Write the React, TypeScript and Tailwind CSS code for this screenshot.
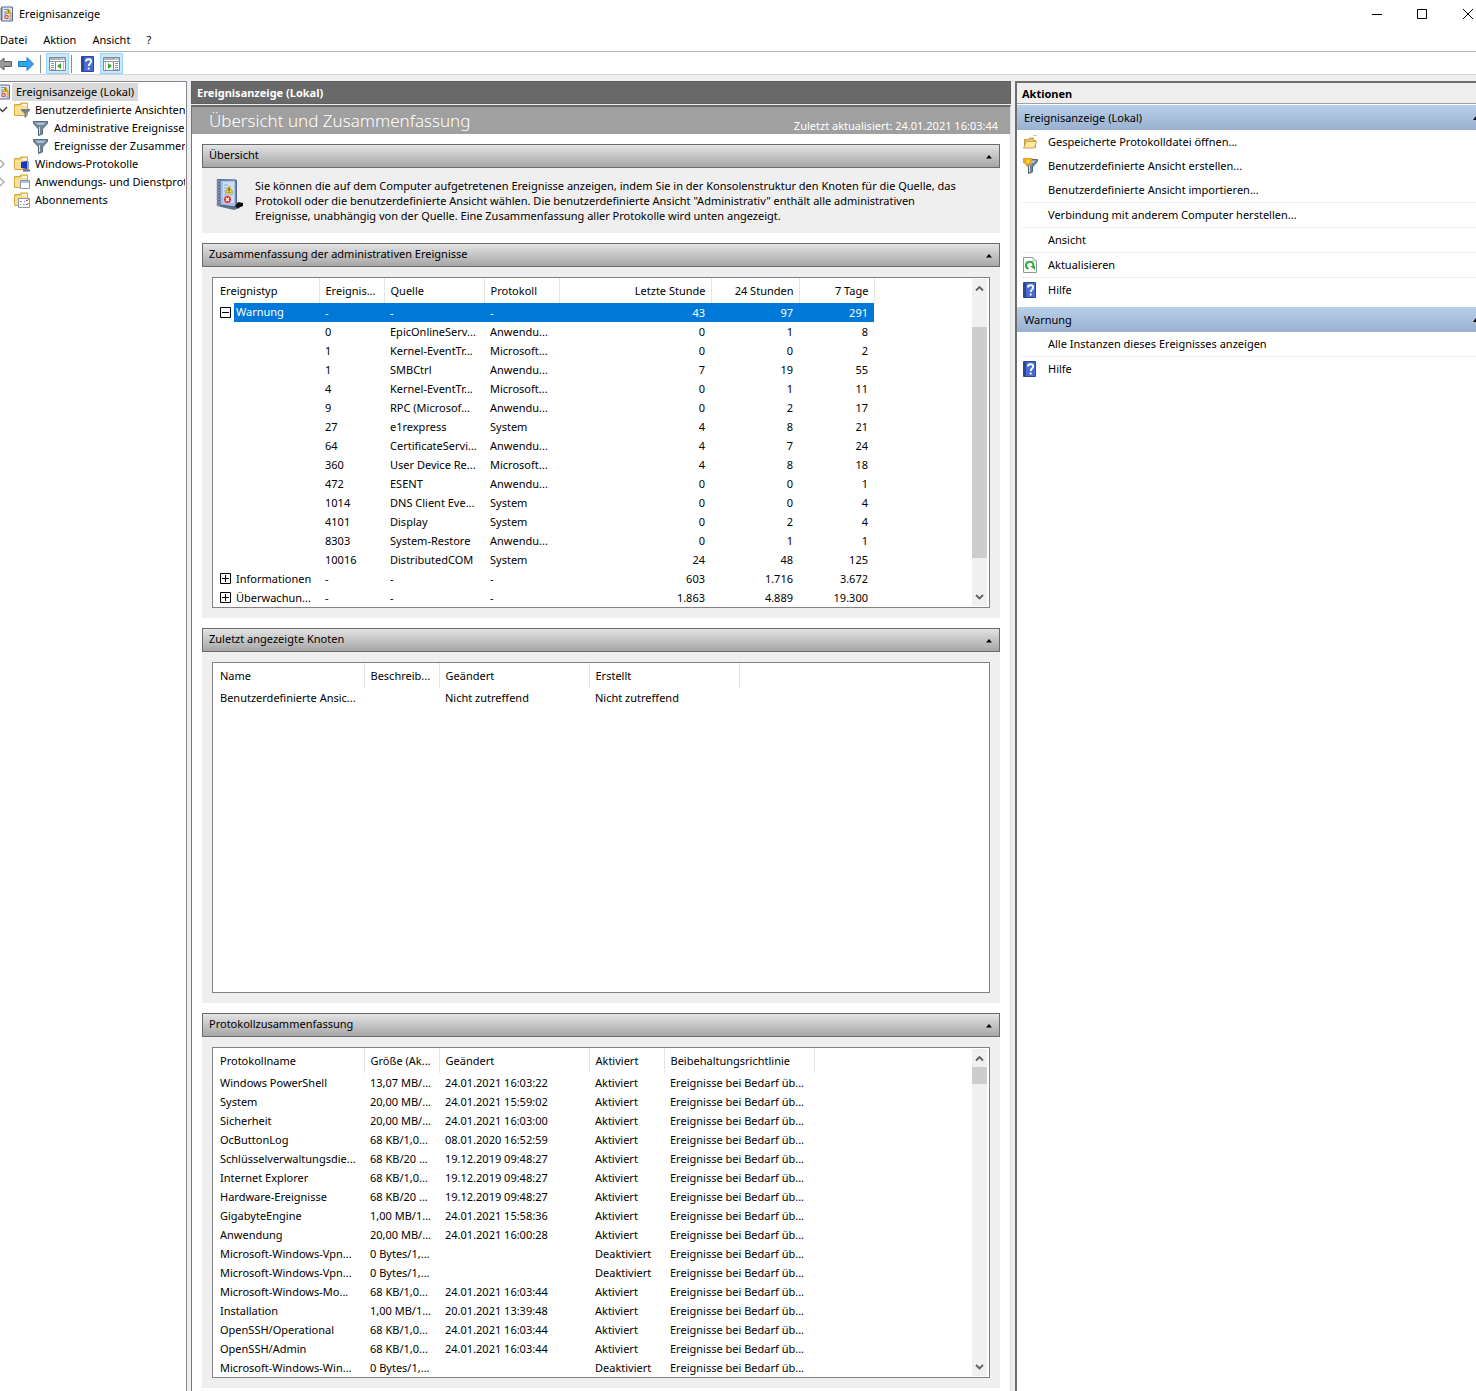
import type { ReactNode } from "react";

const treeItems = [
  { label: "Benutzerdefinierte Ansichten", icon: "folder-filter", level: 1, state: "open" },
  { label: "Administrative Ereignisse", icon: "filter", level: 2 },
  { label: "Ereignisse der Zusammenfassung", icon: "filter", level: 2 },
  { label: "Windows-Protokolle", icon: "folder-screen", level: 1, state: "closed" },
  { label: "Anwendungs- und Dienstprotokolle", icon: "folder-window", level: 1, state: "closed" },
  { label: "Abonnements", icon: "folder-sheet", level: 1 },
];

const events = [
  ["0", "EpicOnlineServ...", "Anwendu...", "0", "1", "8"],
  ["1", "Kernel-EventTr...", "Microsoft...", "0", "0", "2"],
  ["1", "SMBCtrl", "Anwendu...", "7", "19", "55"],
  ["4", "Kernel-EventTr...", "Microsoft...", "0", "1", "11"],
  ["9", "RPC (Microsof...", "Anwendu...", "0", "2", "17"],
  ["27", "e1rexpress", "System", "4", "8", "21"],
  ["64", "CertificateServi...", "Anwendu...", "4", "7", "24"],
  ["360", "User Device Re...", "Microsoft...", "4", "8", "18"],
  ["472", "ESENT", "Anwendu...", "0", "0", "1"],
  ["1014", "DNS Client Eve...", "System", "0", "0", "4"],
  ["4101", "Display", "System", "0", "2", "4"],
  ["8303", "System-Restore", "Anwendu...", "0", "1", "1"],
  ["10016", "DistributedCOM", "System", "24", "48", "125"],
];

const eventGroups = [
  ["Informationen", "603", "1.716", "3.672"],
  ["Überwachun...", "1.863", "4.889", "19.300"],
];

const logs = [
  ["Windows PowerShell", "13,07 MB/...", "24.01.2021 16:03:22", "Aktiviert"],
  ["System", "20,00 MB/...", "24.01.2021 15:59:02", "Aktiviert"],
  ["Sicherheit", "20,00 MB/...", "24.01.2021 16:03:00", "Aktiviert"],
  ["OcButtonLog", "68 KB/1,0...", "08.01.2020 16:52:59", "Aktiviert"],
  ["Schlüsselverwaltungsdie...", "68 KB/20 ...", "19.12.2019 09:48:27", "Aktiviert"],
  ["Internet Explorer", "68 KB/1,0...", "19.12.2019 09:48:27", "Aktiviert"],
  ["Hardware-Ereignisse", "68 KB/20 ...", "19.12.2019 09:48:27", "Aktiviert"],
  ["GigabyteEngine", "1,00 MB/1...", "24.01.2021 15:58:36", "Aktiviert"],
  ["Anwendung", "20,00 MB/...", "24.01.2021 16:00:28", "Aktiviert"],
  ["Microsoft-Windows-Vpn...", "0 Bytes/1,...", "", "Deaktiviert"],
  ["Microsoft-Windows-Vpn...", "0 Bytes/1,...", "", "Deaktiviert"],
  ["Microsoft-Windows-Mo...", "68 KB/1,0...", "24.01.2021 16:03:44", "Aktiviert"],
  ["Installation", "1,00 MB/1...", "20.01.2021 13:39:48", "Aktiviert"],
  ["OpenSSH/Operational", "68 KB/1,0...", "24.01.2021 16:03:44", "Aktiviert"],
  ["OpenSSH/Admin", "68 KB/1,0...", "24.01.2021 16:03:44", "Aktiviert"],
  ["Microsoft-Windows-Win...", "0 Bytes/1,...", "", "Deaktiviert"],
];

export default function App() {
  return (
    <div className="flex min-h-screen flex-col overflow-hidden bg-[#efefef] font-['Noto_Sans','Open_Sans',sans-serif] text-[11px] leading-[18px] text-black">
      <header className="bg-white">
        <div className="flex h-7 items-center">
          <ViewerIcon />
          <h1 className="ml-1.5">Ereignisanzeige</h1>
          <div className="ml-auto flex items-center">
            <button aria-label="Minimieren" className="flex w-[45px] justify-center"><Caption d="M0 5.5h10" /></button>
            <button aria-label="Maximieren" className="flex w-[45px] justify-center"><Caption d="M.5.5h9v9h-9z" /></button>
            <button aria-label="Schließen" className="flex w-[31px] justify-end pr-0.5"><Caption d="M0 0l10 10M10 0L0 10" /></button>
          </div>
        </div>
        <nav className="flex h-6 items-center gap-4 border-b border-[#b4b4b4]">
          <button>Datei</button>
          <button>Aktion</button>
          <button>Ansicht</button>
          <button>?</button>
        </nav>
        <div className="flex h-[23px] items-center border-b border-[#d5d5d5] pt-px">
          <button aria-label="Zurück"><Arrow dir="back" /></button>
          <button aria-label="Vorwärts" className="ml-1.5"><Arrow dir="forward" /></button>
          <span className="ml-1.5 h-[18px] w-px bg-[#8c8c8c]" />
          <button aria-label="Konsolenstruktur" className="ml-[5px] flex h-[21px] w-[23px] items-center justify-center border border-[#99d1ff] bg-[#cce8ff]"><PaneIcon side="left" /></button>
          <span className="ml-0.5 h-[18px] w-px bg-[#8c8c8c]" />
          <button aria-label="Hilfe" className="ml-[9px]"><HelpIcon /></button>
          <button aria-label="Aktionsbereich" className="ml-1.5 flex h-[21px] w-[23px] items-center justify-center border border-[#99d1ff] bg-[#cce8ff]"><PaneIcon side="right" /></button>
        </div>
      </header>

      <div className="flex flex-1 pt-[6px]">
        <Tree />
        <main className="ml-1 flex min-w-0 flex-1 flex-col">
          <div className="h-[23px] border border-[#606060] bg-[#696969] px-[5px] font-bold leading-[22px] text-white">Ereignisanzeige (Lokal)</div>
          <div className="mt-px flex-1 border-l border-t-2 border-r border-r-[#dcdcdc] border-l-[#777] border-t-[#6a6a6a] bg-white">
            <div className="flex h-[27px] items-end justify-between bg-[#a0a0a0] pl-[17px] pr-3 text-white">
              <h2 className="text-[17px] font-light leading-[26px]">Übersicht und Zusammenfassung</h2>
              <span className="leading-4">Zuletzt aktualisiert: 24.01.2021 16:03:44</span>
            </div>
            <div className="flex flex-col gap-2.5 px-2.5 pt-2.5">
              <Section title="Übersicht">
                <div className="flex h-[45px] gap-3 pl-1 leading-[15px]">
                  <BigViewerIcon />
                  <p className="whitespace-nowrap">
                    Sie können die auf dem Computer aufgetretenen Ereignisse anzeigen, indem Sie in der Konsolenstruktur den Knoten für die Quelle, das<br />
                    Protokoll oder die benutzerdefinierte Ansicht wählen. Die benutzerdefinierte Ansicht "Administrativ" enthält alle administrativen<br />
                    Ereignisse, unabhängig von der Quelle. Eine Zusammenfassung aller Protokolle wird unten angezeigt.
                  </p>
                </div>
              </Section>
              <Section title="Zusammenfassung der administrativen Ereignisse">
                <ListBox scrollbar={<Scrollbar thumb="mt-[30px] h-[231px]" />}>
                  <EventTable />
                </ListBox>
              </Section>
              <Section title="Zuletzt angezeigte Knoten">
                <ListBox>
                  <table className="w-[526px] table-fixed">
                    <colgroup><col className="w-[151px]" /><col className="w-[75px]" /><col className="w-[150px]" /><col className="w-[150px]" /></colgroup>
                    <thead><tr><Th>Name</Th><Th>Beschreib...</Th><Th>Geändert</Th><Th>Erstellt</Th></tr></thead>
                    <tbody>
                      <tr><Td>Benutzerdefinierte Ansic...</Td><Td /><Td>Nicht zutreffend</Td><Td>Nicht zutreffend</Td></tr>
                    </tbody>
                  </table>
                </ListBox>
              </Section>
              <Section title="Protokollzusammenfassung">
                <ListBox scrollbar={<Scrollbar thumb="h-[17px]" />}>
                  <table className="w-[601px] table-fixed">
                    <colgroup><col className="w-[151px]" /><col className="w-[75px]" /><col className="w-[150px]" /><col className="w-[75px]" /><col className="w-[150px]" /></colgroup>
                    <thead><tr><Th>Protokollname</Th><Th>Größe (Ak...</Th><Th>Geändert</Th><Th>Aktiviert</Th><Th>Beibehaltungsrichtlinie</Th></tr></thead>
                    <tbody>
                      {logs.map(([name, size, changed, enabled], i) => (
                        <tr key={i}><Td>{name}</Td><Td>{size}</Td><Td>{changed}</Td><Td>{enabled}</Td><Td>Ereignisse bei Bedarf üb...</Td></tr>
                      ))}
                    </tbody>
                  </table>
                </ListBox>
              </Section>
            </div>
          </div>
        </main>
        <Actions />
      </div>
    </div>
  );
}

function Tree() {
  return (
    <aside className="w-[187px] shrink-0 overflow-hidden whitespace-nowrap border-r border-t border-[#828790] bg-white pt-px">
      <div className="flex h-[18px] items-center">
        <ViewerIcon small />
        <button className="ml-0.5 h-[18px] bg-[#d9d9d9] px-1">Ereignisanzeige (Lokal)</button>
      </div>
      <ul className="mr-px overflow-hidden">
        {treeItems.map((item) => (
          <li key={item.label} className={item.level === 2 ? "flex h-[18px] items-center pl-[33px]" : "flex h-[18px] items-center"}>
            {item.level === 1 && (
              <span className="flex w-3.5 shrink-0">
                {item.state === "open" && <svg width="8" height="8" viewBox="0 0 8 8" fill="none" stroke="#404040" strokeWidth="1.5"><path d="M-1 2l3.500 3.500L7 1" /></svg>}
                {item.state === "closed" && <svg width="8" height="10" viewBox="0 0 8 10" fill="none" stroke="#a6a6a6" strokeWidth="1.300"><path d="M0 1l4 4-4 4" /></svg>}
              </span>
            )}
            <TreeIcon name={item.icon} />
            <button className="ml-[5px]">{item.label}</button>
          </li>
        ))}
      </ul>
    </aside>
  );
}

function Section({ title, children }: { title: string; children: ReactNode }) {
  return (
    <section>
      <button className="flex h-6 w-full items-center justify-between border border-[#6a6a6a] bg-linear-to-b from-[#e4e4e4] to-[#a6a6a6] pb-0.5 pl-1.5 pr-[7px]">
        {title}
        <svg width="6" height="4" viewBox="0 0 6 4" className="mt-1"><path d="M3 0l3 3.500H0z" /></svg>
      </button>
      <div className="bg-[#efefef] p-2.5">{children}</div>
    </section>
  );
}

function ListBox({ scrollbar, children }: { scrollbar?: ReactNode; children: ReactNode }) {
  return (
    <div className="flex min-h-[331px] justify-between border border-[#828282] bg-white">
      <div className="min-w-0">{children}</div>
      {scrollbar}
    </div>
  );
}

function Scrollbar({ thumb }: { thumb: string }) {
  return (
    <div className="my-px mr-0.5 flex w-[15px] flex-col bg-[#f0f0f0]">
      <svg width="15" height="18" viewBox="0 0 15 18" fill="none" stroke="#606060" strokeWidth="1.800"><path d="M4 11.500l3.500-3.500 3.500 3.500" /></svg>
      <div className={`bg-[#cdcdcd] ${thumb}`} />
      <svg width="15" height="18" viewBox="0 0 15 18" fill="none" stroke="#606060" strokeWidth="1.800" className="mt-auto"><path d="M4 7l3.500 3.500L11 7" /></svg>
    </div>
  );
}

function Th({ children, right }: { children?: ReactNode; right?: boolean }) {
  return (
    <th className={`h-[25px] overflow-hidden whitespace-nowrap border-r border-[#e5e5e5] p-0 pl-1.5 font-normal first:pl-[7px] ${right ? "pr-[5px] text-right" : "text-left"}`}>{children}</th>
  );
}

function Td({ children, right }: { children?: ReactNode; right?: boolean }) {
  return (
    <td className={`h-[19px] overflow-hidden whitespace-nowrap p-0 pl-1.5 first:pl-[7px] ${right ? "pr-1.5 text-right" : ""}`}>{children}</td>
  );
}

function EventTable() {
  return (
    <table className="w-[661px] table-fixed">
      <colgroup>
        <col className="w-[106px]" /><col className="w-[65px]" /><col className="w-[100px]" /><col className="w-[75px]" /><col className="w-[152px]" /><col className="w-[88px]" /><col className="w-[75px]" />
      </colgroup>
      <thead>
        <tr><Th>Ereignistyp</Th><Th>Ereignis...</Th><Th>Quelle</Th><Th>Protokoll</Th><Th right>Letzte Stunde</Th><Th right>24 Stunden</Th><Th right>7 Tage</Th></tr>
      </thead>
      <tbody>
        <tr className="bg-[#0078d7] text-white">
          <td className="h-[19px] p-0">
            <div className="flex">
              <div className="flex h-[19px] w-[21px] items-center bg-white pl-[7px]"><Expander open /></div>
              <span className="pl-0.5">Warnung</span>
            </div>
          </td>
          <Td>-</Td><Td>-</Td><Td>-</Td><Td right>43</Td><Td right>97</Td><Td right>291</Td>
        </tr>
        {events.map(([id, source, log, hour, day, week], i) => (
          <tr key={i}><Td /><Td>{id}</Td><Td>{source}</Td><Td>{log}</Td><Td right>{hour}</Td><Td right>{day}</Td><Td right>{week}</Td></tr>
        ))}
        {eventGroups.map(([type, hour, day, week]) => (
          <tr key={type}>
            <Td><div className="flex items-center gap-[5px]"><Expander />{type}</div></Td>
            <Td>-</Td><Td>-</Td><Td>-</Td><Td right>{hour}</Td><Td right>{day}</Td><Td right>{week}</Td>
          </tr>
        ))}
      </tbody>
    </table>
  );
}

function Expander({ open }: { open?: boolean }) {
  return (
    <button aria-label={open ? "Reduzieren" : "Erweitern"}>
      <svg width="11" height="11" viewBox="0 0 11 11" fill="none" stroke="#000"><path d={open ? "M.5.5h10v10H.5zM2 5.500h7" : "M.5.5h10v10H.5zM2 5.500h7M5.500 2v7"} /></svg>
    </button>
  );
}

function Actions() {
  return (
    <aside className="ml-1 w-[461px] shrink-0 border-l-2 border-t-2 border-[#6e6e6e] bg-white">
      <h2 className="h-[21px] border-b border-[#a0a0a0] bg-[#efefef] pl-[5px] font-bold leading-[22px]">Aktionen</h2>
      <ActionHeader>Ereignisanzeige (Lokal)</ActionHeader>
      <ActionRow icon={<OpenFolderIcon />}>Gespeicherte Protokolldatei öffnen...</ActionRow>
      <ActionRow icon={<NewFilterIcon />}>Benutzerdefinierte Ansicht erstellen...</ActionRow>
      <ActionRow>Benutzerdefinierte Ansicht importieren...</ActionRow>
      <ActionRow line>Verbindung mit anderem Computer herstellen...</ActionRow>
      <ActionRow line>Ansicht</ActionRow>
      <ActionRow line icon={<RefreshIcon />}>Aktualisieren</ActionRow>
      <ActionRow line icon={<HelpIcon />}>Hilfe</ActionRow>
      <div className="h-1" />
      <ActionHeader>Warnung</ActionHeader>
      <ActionRow>Alle Instanzen dieses Ereignisses anzeigen</ActionRow>
      <ActionRow line icon={<HelpIcon />}>Hilfe</ActionRow>
    </aside>
  );
}

function ActionHeader({ children }: { children: ReactNode }) {
  return (
    <button className="mt-px flex h-[25px] w-full items-center justify-between overflow-hidden bg-linear-to-b from-[#b9d0ea] to-[#99b1cf] pl-[7px]">
      {children}
      <svg width="3" height="4" viewBox="0 0 3 4"><path d="M3 0v4H0z" /></svg>
    </button>
  );
}

function ActionRow({ icon, line, children }: { icon?: ReactNode; line?: boolean; children: ReactNode }) {
  return (
    <div className="pl-[5px]">
      <button className={`flex w-full items-center text-left ${line ? "h-[25px] border-t border-[#ececec]" : "h-6"}`}>
        <span className="flex w-[26px] shrink-0 pl-px">{icon}</span>
        {children}
      </button>
    </div>
  );
}

function Caption({ d }: { d: string }) {
  return <svg width="11" height="11" viewBox="0 0 11 11" fill="none" stroke="#000"><path d={d} /></svg>;
}

function Arrow({ dir }: { dir: "back" | "forward" }) {
  return dir === "back" ? (
    <svg width="12" height="16" viewBox="4 0 12 16"><path d="M1 8l7-6v3.500h7.500v5H8V14z" fill="#9a9a9a" stroke="#5f5f5f" /></svg>
  ) : (
    <svg width="16" height="16" viewBox="0 0 16 16"><path d="M15.500 8L9 1.500v4H.5v5H9v4z" fill="#2da8f2" stroke="#1878bd" /></svg>
  );
}

function PaneIcon({ side }: { side: "left" | "right" }) {
  return (
    <svg width="17" height="14" viewBox="0 0 17 14">
      <path d="M.5.5h16v13H.5z" fill="#fff" stroke="#7f8790" />
      <path d="M1 1h15v2H1z" fill="#aeb4ba" />
      <path d="M12 2h1M14 2h1" stroke="#fff" />
      <path d="M1 4.500h15" stroke="#8e969e" />
      {side === "left" ? (
        <>
          <path d="M6.500 5v8" stroke="#7f8790" />
          <path d="M2 6.500h3M2 8.500h3M2 10.500h3M2 12.500h3" stroke="#7c9cc0" />
          <path d="M12 6v6L8 9z" fill="#3ea52c" />
          <path d="M14.500 5v8" stroke="#b9bfc5" />
        </>
      ) : (
        <>
          <path d="M10.500 5v8" stroke="#7f8790" />
          <path d="M12 6.500h3M12 8.500h3M12 10.500h3M12 12.500h3" stroke="#7c9cc0" />
          <path d="M5 6v6l4-3z" fill="#3ea52c" />
          <path d="M2.500 5v8" stroke="#b9bfc5" />
        </>
      )}
    </svg>
  );
}

function HelpIcon() {
  return (
    <svg width="13" height="16" viewBox="0 0 13 16">
      <path d="M.5.5h12v15H.5z" fill="#4a6cd0" stroke="#2c4698" />
      <path d="M1 1h2v14H1z" fill="#2c4698" />
      <path d="M5 5.500C5 2.500 10.200 2.500 10.200 5.500 10.200 7.500 7.700 7.600 7.700 10M7.700 11.500v2" fill="none" stroke="#fff" strokeWidth="1.800" />
    </svg>
  );
}

function ViewerIcon({ small }: { small?: boolean }) {
  return (
    <svg width={small ? 10 : 13} height="16" viewBox={small ? "3 0 10 16" : "0 0 13 16"}>
      <path d="M1.500 1h11v14h-11z" fill="#dbe5f4" stroke="#566c94" />
      <path d="M0 3h3M0 5h3M0 7h3M0 9h3M0 11h3M0 13h3" stroke="#6c7890" />
      <path d="M4 3.500h4M4 6h2M9 13h3M4 8h2" stroke="#7f95c0" />
      <path d="M8.500 3l2.800 4.500H5.700z" fill="#f3cf27" stroke="#b9930f" strokeWidth=".8" />
      <path d="M8.500 4.500v2" stroke="#473b0a" strokeWidth=".8" />
      <path d="M9.500 8.500h2.500v3H9.500z" fill="#e6a93c" />
      <circle cx="6.500" cy="11" r="2.300" fill="#d8505a" />
      <path d="M5.500 10l2 2M7.500 10l-2 2" stroke="#fff" strokeWidth=".7" />
    </svg>
  );
}

function BigViewerIcon() {
  return (
    <svg width="27" height="32" viewBox="0 0 27 32" className="shrink-0">
      <path d="M4 1l17 1v26l3 2-6 2L1 28V1z" fill="#60728f" />
      <path d="M4 2h16v24l-1 3L4 27z" fill="#a9c0e4" stroke="#435b86" />
      <path d="M7 4h11v21l-11-1z" fill="#d0def4" />
      <path d="M8 7h4M8 10h3M8 13h9M8 17h9M8 21h2" stroke="#91a8d0" />
      <path d="M0 3h4M0 6h4M0 9h4M0 12h4M0 15h4M0 18h4M0 21h4M0 24h4M0 27h4" stroke="#9ba6b7" />
      <path d="M13 8l4 7H9z" fill="#f8df23" stroke="#a58c10" strokeWidth=".7" />
      <path d="M13 10v3M13 13.500v1" stroke="#222" />
      <circle cx="11.500" cy="21.500" r="4" fill="#cf3542" stroke="#fff" strokeWidth=".5" />
      <path d="M10 20l3 3M13 20l-3 3" stroke="#fff" strokeWidth="1.200" />
      <path d="M19 29l3-5 5 1v3l-5 2z" fill="#101010" />
    </svg>
  );
}

function FilterShape() {
  return (
    <>
      <path d="M.5 1.500h14v2L9.500 9v5l-4 1.500V9l-5-5.500z" fill="#6f8799" stroke="#566878" />
      <path d="M2 2.500h11L10.500 5h-6z" fill="#a9c1d2" />
      <path d="M6.500 7v7" stroke="#d3e0e9" />
    </>
  );
}

function TreeIcon({ name }: { name: string }) {
  if (name === "filter") return <svg width="16" height="16" viewBox="0 0 16 16" className="shrink-0"><FilterShape /></svg>;
  return (
    <svg width="16" height="16" viewBox="0 0 16 16" className="shrink-0">
      <path d="M.5 2.500h6V1h7v12.500H.5z" fill="#f0cf6d" stroke="#d5aa42" />
      <path d="M1 4h12v9H1z" fill="#f8df91" />
      <path d="M8 2h5v2H8z" fill="#fdf6df" />
      {name === "folder-filter" && <path d="M7 7h9v1.500l-3.500 3V15L10.500 16v-4.500L7 8.500z" fill="#77818b" />}
      {name === "folder-screen" && (
        <>
          <path d="M7 6l6-1v8l-6-1z" fill="#1436c3" />
          <path d="M13 5h2v8h-2z" fill="#8fa6dd" />
          <path d="M9 14.500h7" stroke="#646d7c" strokeWidth="2" />
        </>
      )}
      {name === "folder-window" && (
        <>
          <path d="M6.500 6.500h9v8h-9z" fill="#fff" stroke="#8597ad" />
          <path d="M7 7h8v2H7z" fill="#abc4df" />
        </>
      )}
      {name === "folder-sheet" && (
        <>
          <path d="M4.500 6.500h11v9h-11z" fill="#fff" stroke="#8f9bab" />
          <path d="M6 9.500h2M10 9.500h1M6 12.500h1M9 12.500h2" stroke="#7c9cc8" />
          <path d="M12 8l1 1 1.500-2M12 12l1 1 1.500-2" fill="none" stroke="#cf4a4a" />
        </>
      )}
    </svg>
  );
}

function OpenFolderIcon() {
  return (
    <svg width="15" height="16" viewBox="0 0 15 16">
      <path d="M1.500 13.500v-8h4l1-1.500h4v2.500h2v7z" fill="#e6c269" stroke="#c39b42" />
      <path d="M.5 14l3-6.500h10l-2 6.500z" fill="#fae6a6" stroke="#cfa54e" />
      <path d="M10 1.500h4" stroke="#e2ca8f" />
    </svg>
  );
}

function NewFilterIcon() {
  return (
    <svg width="16" height="16" viewBox="0 0 16 16">
      <FilterShape />
      <path d="M0 0h9.500L8.500 3.500 9 7 5.500 6 4 9 2.500 6 0 5z" fill="#f5a31a" />
      <circle cx="5" cy="3.500" r="2" fill="#ffd64a" />
    </svg>
  );
}

function RefreshIcon() {
  return (
    <svg width="14" height="16" viewBox="0 0 14 16">
      <path d="M.5.5h9.500l3.500 3.500v11.500H.5z" fill="#fff" stroke="#8d979f" />
      <path d="M10 .5V4h3.500" fill="#e3e8eb" stroke="#b1b8bd" />
      <path d="M5.500 12C1 9.500 3 4.800 6.800 4.800 10 4.800 11 7.500 10 10" fill="none" stroke="#35ab3d" strokeWidth="2" />
      <path d="M7 9h5v4z" fill="#35ab3d" />
    </svg>
  );
}
